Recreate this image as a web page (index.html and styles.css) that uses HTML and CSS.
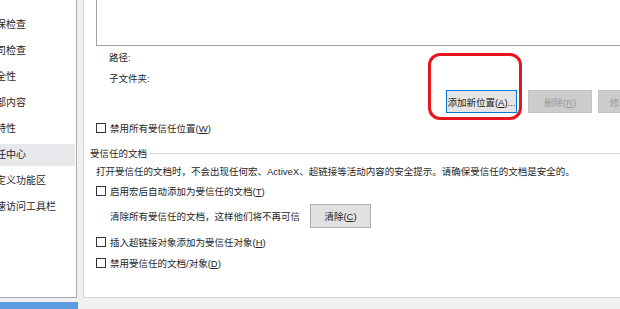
FILE: index.html
```html
<!DOCTYPE html>
<html lang="zh-CN">
<head>
    <meta charset="UTF-8">
    <title>信任中心</title>
    <link rel="stylesheet" href="styles.css">
</head>
<body>

<div class="window">
    <div class="side">
        <div class="nav">
            <div class="nav-list">
                <div class="nav-item">保检查</div>
                <div class="nav-item">司检查</div>
                <div class="nav-item">全性</div>
                <div class="nav-item">部内容</div>
                <div class="nav-item">特性</div>
                <div class="nav-item active">任中心</div>
                <div class="nav-item">定义功能区</div>
                <div class="nav-item">速访问工具栏</div>
            </div>
        </div>
        <div class="nav-foot"></div>
    </div>

    <div class="main">
        <div class="listbox"></div>

        <div class="row field">路径:</div>
        <div class="row field">子文件夹:</div>

        <div class="btn-row">
            <button class="btn focus">添加新位置(<u>A</u>)...</button>
            <button class="btn disabled">删除(<u>R</u>)</button>
            <button class="btn disabled">修改(<u>M</u>)...</button>
            <div class="mark"></div>
        </div>

        <label class="row check first"><span class="box"></span><span>禁用所有受信任位置(<u>W</u>)</span></label>

        <div class="group-title"><span>受信任的文档</span><span class="rule"></span></div>
        <div class="row desc">打开受信任的文档时，不会出现任何宏、ActiveX、超链接等活动内容的安全提示。请确保受信任的文档是安全的。</div>

        <label class="row check tight"><span class="box"></span><span>启用宏后自动添加为受信任的文档(<u>T</u>)</span></label>

        <div class="clear-row">
            <span>清除所有受信任的文档，这样他们将不再可信</span>
            <button class="btn plain">清除(<u>C</u>)</button>
        </div>

        <label class="row check h"><span class="box"></span><span>插入超链接对象添加为受信任对象(<u>H</u>)</span></label>
        <label class="row check d"><span class="box"></span><span>禁用受信任的文档/对象(<u>D</u>)</span></label>
    </div>
</div>

</body>
</html>
```

FILE: styles.css
```css
* {
    box-sizing: border-box;
}
body {
    margin: 0;
    background: #f0f0f0;
    font-family: "Liberation Sans", "Noto Sans CJK SC", sans-serif;
    font-size: 9.5px;
    color: #262626;
    overflow: hidden;
    text-autospace: no-autospace;
}
u { text-decoration: underline; }

.window {
    display: flex;
    width: 620px;
    height: 309px;
    overflow: hidden;
}

/* left navigation (behind dialog) */
.side {
    width: 78px;
    flex-shrink: 0;
    display: flex;
    flex-direction: column;
}
.nav {
    width: 77px;
    height: 298px;
    background: white;
    border-right: 1px solid #a9a9a9;
    border-bottom: 1px solid #a9a9a9;
    overflow: hidden;
}
.nav-list {
    margin-left: -4px;
    padding-top: 14px;
}
.nav-item {
    height: 22px;
    line-height: 22px;
    margin-bottom: 4px;
    width: 79px;
    font-size: 10px;
    white-space: nowrap;
}
.nav-item.active { background: #e6e8ec; }
.nav-foot {
    margin-top: 4px;
    height: 7px;
    background: #5b9be0;
}

/* dialog content */
.main {
    position: relative;
    width: 540px;
    margin-left: 5px;
    height: 298px;
    background: white;
    border-left: 1px solid #d6d6d6;
    border-bottom: 1px solid #d6d6d6;
    padding-left: 12px;
    flex-shrink: 0;
}
.listbox {
    height: 47px;
    margin-top: -1px;
    margin-right: -20px;
    border: 1px solid #a0a0a0;
    border-right: none;
}
.row {
    display: flex;
    align-items: center;
    white-space: nowrap;
}
.field {
    height: 21px;
    padding-left: 13px;
}
.field:first-of-type { margin-top: 2px; }

.btn-row {
    display: flex;
    margin-top: 2px;
    padding-left: 350px;
    height: 23px;
    position: relative;
}
.btn {
    font: inherit;
    height: 23px;
    padding: 0;
    border: 1px solid #adadad;
    background: #e1e1e1;
    color: #262626;
    white-space: nowrap;
    flex-shrink: 0;
}
.btn.focus {
    width: 71px;
    border-color: #0078d7;
    background: #e5e5e5;
    overflow: hidden;
}
.btn.disabled {
    width: 64px;
    margin-left: 11px;
    background: #cccccc;
    border-color: #c4c4c4;
    color: #9a9a9a;
}
.btn.disabled + .btn.disabled { margin-left: 6px; }
.btn.plain {
    width: 61px;
    height: 24px;
    margin-left: 10px;
}

/* red annotation drawn over the screenshot */
.mark {
    position: absolute;
    left: 332px;
    top: -37px;
    width: 94px;
    height: 67px;
    border: 3px solid #e8141f;
    border-radius: 12px;
}

.check {
    height: 18px;
    gap: 4px;
}
.check.first { margin-top: 6px; height: 18px; }
.check.tight { margin-top: 2px; }
.check.h { margin-top: 5px; }
.check.d { margin-top: 3px; }
.box {
    width: 10px;
    height: 10px;
    border: 1px solid #333;
    background: white;
    flex-shrink: 0;
}

.group-title {
    display: flex;
    align-items: center;
    height: 18px;
    margin-top: 7px;
    margin-left: -6px;
    margin-right: -20px;
}
.group-title .rule {
    flex: 1;
    height: 1px;
    background: #d5d5d5;
    margin-left: 2px;
}
.desc {
    height: 18px;
}

.clear-row {
    display: flex;
    align-items: center;
    height: 24px;
    margin-top: 4px;
    padding-left: 14px;
    white-space: nowrap;
}
```
